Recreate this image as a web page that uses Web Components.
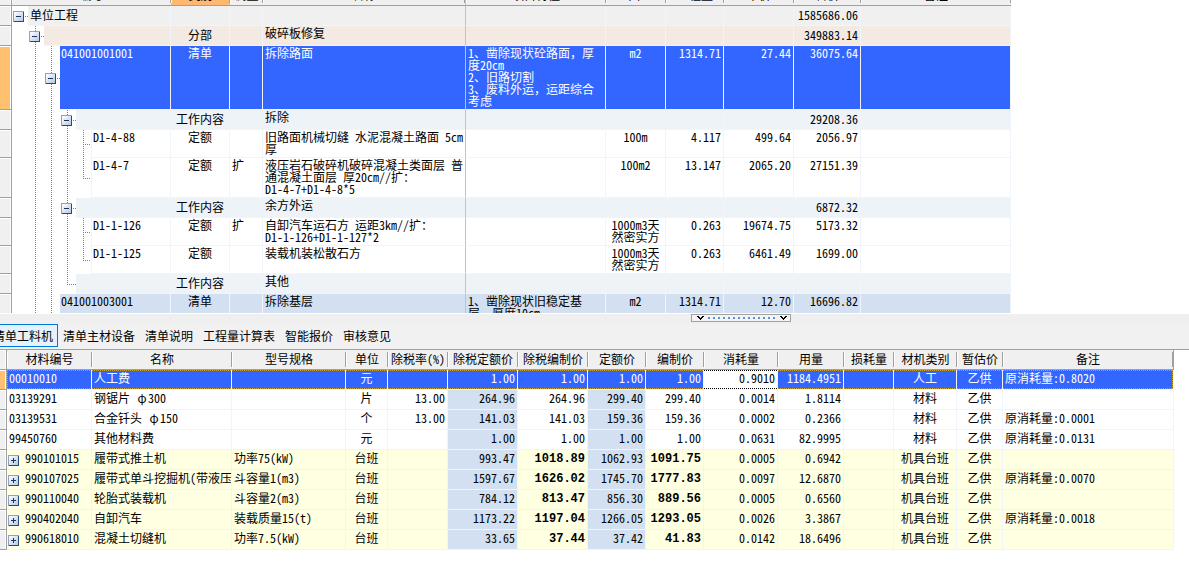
<!DOCTYPE html>
<html lang="zh-CN">
<head>
<meta charset="utf-8">
<title>单位工程计价</title>
<style>
html, body { margin: 0; height: 100%; background: #fff; overflow: hidden; }
</style>
</head>
<body>
<cost-workspace></cost-workspace>
<script>
const GRID_CSS = `
:host { display: block; overflow: hidden; color: #000; --line: #f0f4fb; }
* { box-sizing: border-box; }
table { width: 100%; table-layout: fixed; border-collapse: separate; border-spacing: 0; }
th, td {
  padding: 1px 2px 0; height: 20px; border-right: 1px solid var(--line); border-bottom: 1px solid var(--line);
  font-weight: 400; line-height: 12px; text-align: left; vertical-align: top; white-space: nowrap; overflow: hidden;
}
th { padding-top: 3px; }
thead th {
  text-align: center; padding-left: 1px; padding-right: 1px; border-right: 0; border-bottom: 1px solid #a0a0a0;
  background: linear-gradient(#a0a0a0, #a0a0a0) 100% 2px / 1px 15px no-repeat,
              linear-gradient(#fff, #fff) 0 2px / 1px 15px no-repeat, #f0f0f0;
}
.rowhead { background: #f0f0f0; border-right: 1px solid #a0a0a0; border-bottom: 1px solid #a0a0a0; box-shadow: inset -1px 1px #fff; }
.rowhead.on { background: #ffc070; }
.c { text-align: center; }
.r { text-align: right; }
`;

/* Expand / collapse box of a tree row */
class TreeToggle extends HTMLElement {
  connectedCallback() {
    const open = this.hasAttribute('open');
    this.attachShadow({ mode: 'open' }).innerHTML = `
      <style>
        :host { display: block; width: 11px; height: 11px; }
        button { display: block; width: 11px; height: 11px; padding: 0; border: 0; background: none; }
        svg { display: block; }
      </style>
      <button type="button" aria-expanded="${open}" aria-label="${open ? '折叠' : '展开'}">
        <svg width="11" height="11" viewBox="0 0 11 11" shape-rendering="crispEdges">
          <defs><linearGradient id="g" x1="0" y1="0" x2="1" y2="1">
            <stop offset="0" stop-color="#fff"/><stop offset="1" stop-color="#b4c8e8"/></linearGradient></defs>
          <rect width="11" height="11" fill="#2c4a70"/>
          <path d="M0 0H11V1H1V11H0Z" fill="#8ba3c4"/>
          <rect x="1" y="1" width="9" height="9" fill="url(#g)"/>
          <rect x="3" y="5" width="5" height="1" fill="#1c355c"/>
          ${open ? '' : '<rect x="5" y="3" width="1" height="5" fill="#1c355c"/>'}
        </svg>
      </button>`;
  }
}
customElements.define('tree-toggle', TreeToggle);

/* Bill of quantities: a tree in the first column */
class BillGrid extends HTMLElement {
  connectedCallback() {
    const widths = [12, 159, 59, 33, 203, 140, 60, 58, 70, 67];
    const heads = ['编号', '类别', '调整', '名称', '项目特征', '单位', '工程量', '单价', '合价', '备注'];
    const comma = '<span class="full">，</span>';
    // kind, row height, guides, code, type, flag, name, feature, unit, quantity, price, total
    const rows = [
      ['root', 20, 'b', '单位工程', '', '', '', '', '', '', '', '1585686.06'],
      ['part', 20, ' B', '', '分部', '', '破碎板修复', '', '', '', '', '349883.14'],
      ['sel', 64, ' vB', '041001001001', '清单', '', '拆除路面', `1、凿除现状砼路面${comma}厚<br>度20cm<br>2、旧路切割<br>3、废料外运${comma}运距综合<br>考虑`, 'm2', '1314.71', '27.44', '36075.64'],
      ['work', 20, ' vvB', '', '工作内容', '', '拆除', '', '', '', '', '29208.36'],
      ['leaf', 28, ' vvvt', 'D1-4-88', '定额', '', '旧路面机械切缝 水泥混凝土路面 5cm<br>厚', '', '100m', '4.117', '499.64', '2056.97'],
      ['leaf', 40, ' vvvl', 'D1-4-7', '定额', '扩', '液压岩石破碎机破碎混凝土类面层 普<br>通混凝土面层 厚20cm//扩：<br>D1-4-7+D1-4-8*5', '', '100m2', '13.147', '2065.20', '27151.39'],
      ['work', 20, ' vvB', '', '工作内容', '', '余方外运', '', '', '', '', '6872.32'],
      ['leaf', 28, ' vvvt', 'D1-1-126', '定额', '扩', '自卸汽车运石方 运距3km//扩：<br>D1-1-126+D1-1-127*2', '', '1000m3天<br>然密实方', '0.263', '19674.75', '5173.32'],
      ['leaf', 28, ' vvvl', 'D1-1-125', '定额', '', '装载机装松散石方', '', '1000m3天<br>然密实方', '0.263', '6461.49', '1699.00'],
      ['work', 20, ' vvl', '', '工作内容', '', '其他', '', '', '', '', ''],
      ['item', 64, ' vB', '041001003001', '清单', '', '拆除基层', `1、凿除现状旧稳定基<br>层${comma}厚度10cm`, 'm2', '1314.71', '12.70', '16696.82'],
    ];
    const guide = g => `<span class="g ${{ v: 'v', t: 'v h', l: 'e h', b: 'h', B: 'v h' }[g] || ''}">${/b/i.test(g) ? '<tree-toggle open></tree-toggle>' : ''}</span>`;
    const body = rows.map(([kind, h, guides, code, type, flag, name, feat, unit, qty, price, total]) => `
      <tr class="${kind} h${h}">
        <th class="rowhead${kind === 'sel' ? ' on' : ''}" scope="row"></th>
        <td class="tree"><div class="node">${[...guides].map(guide).join('')}<span class="label">${code}</span></div></td>
        <td class="c">${type}</td><td>${flag}</td><td class="name">${name}</td><td class="feat">${feat}</td>
        <td class="c">${unit}</td><td class="r">${qty}</td><td class="r">${price}</td><td class="r">${total}</td><td></td>
      </tr>`).join('');
    this.attachShadow({ mode: 'open' }).innerHTML = `
      <style>${GRID_CSS}
        :host { padding-right: 178px; border-bottom: 1px solid #fff; }
        table { margin-top: -14px; }
        .h28 > * { height: 28px; } .h40 > * { height: 40px; } .h64 > * { height: 64px; }
        thead th.on { background-color: #ffb870; }
        thead th:nth-child(5), td.name { border-right: 1px solid #a6c8f0; }
        .full { font-feature-settings: normal; }
        .root td, .part td, .work td { padding-top: 3px; }
        .part .name, .work .name { padding-top: 1px; }
        .root td, .root .label { background: #f0f0f0; }
        .part td, .part .label { background: #f2eae3; }
        .work td, .work .label { background: #eef3f8; }
        .item td, .item .label { background: #d2e0f1; }
        .sel td, .sel .label { background: #3366ff; color: #fff; }
        tbody tr td.tree { padding: 0; background: #fff; border: 0; }
        .node { display: flex; height: 100%; }
        .label { flex: 1; padding: 1px 1px 0; border-right: 1px solid var(--line); border-bottom: 1px solid var(--line); }
        .root .label { padding: 3px 2px 0; }
        .leaf .label { border-left: 1px solid var(--line); margin-left: -1px; }
        .g { display: flex; align-items: center; width: 16px; flex: none; }
        .g tree-toggle { margin: 0 -5px 0 1px; flex: none; }
        .v, .e { background: linear-gradient(#808080 50%, transparent 50%) 7px 0 / 1px 2px repeat-y; }
        .e { background: linear-gradient(#fff, #fff) 0 100% / 100% 50% no-repeat,
                         linear-gradient(#808080 50%, transparent 50%) 7px 0 / 1px 2px repeat-y; }
        .h::after { content: ""; width: 9px; height: 1px; margin-left: 7px;
          background: linear-gradient(90deg, #808080 50%, transparent 50%) 0 0 / 2px 1px; }
        .g tree-toggle { position: relative; z-index: 1; }
        .g:has(tree-toggle)::after { margin-left: 6px; width: 3px; }
      </style>
      <table>
        <colgroup>${widths.map(w => `<col style="width:${w}px">`).join('')}<col></colgroup>
        <thead><tr><th class="rowhead"></th>${heads.map((t, i) => `<th scope="col"${i === 1 ? ' class="on"' : ''}>${t}</th>`).join('')}</tr></thead>
        <tbody>${body}</tbody>
      </table>`;
  }
}
customElements.define('bill-grid', BillGrid);

/* Labour, material and machine resources of the selected bill item */
class ResourceGrid extends HTMLElement {
  connectedCallback() {
    const widths = [7, 85, 140, 114, 42, 60, 70, 70, 58, 58, 74, 66, 50, 63, 46];
    const heads = ['材料编号', '名称', '型号规格', '单位', '除税率(%)', '除税定额价', '除税编制价', '定额价', '编制价', '消耗量', '用量', '损耗量', '材机类别', '暂估价', '备注'];
    const phi = '<span class="phi">φ</span>';
    const rows = [
      ['00010010', '人工费', '', '元', '', '1.00', '1.00', '1.00', '1.00', '0.9010', '1184.4951', '', '人工', '乙供', '原消耗量:0.8020'],
      ['03139291', `钢锯片 ${phi}300`, '', '片', '13.00', '264.96', '264.96', '299.40', '299.40', '0.0014', '1.8114', '', '材料', '乙供', ''],
      ['03139531', `合金钎头 ${phi}150`, '', '个', '13.00', '141.03', '141.03', '159.36', '159.36', '0.0002', '0.2366', '', '材料', '乙供', '原消耗量:0.0001'],
      ['99450760', '其他材料费', '', '元', '', '1.00', '1.00', '1.00', '1.00', '0.0631', '82.9995', '', '材料', '乙供', '原消耗量:0.0131'],
      ['990101015', '履带式推土机', '功率75(kW)', '台班', '', '993.47', '1018.89', '1062.93', '1091.75', '0.0005', '0.6942', '', '机具台班', '乙供', ''],
      ['990107025', '履带式单斗挖掘机(带液压', '斗容量1(m3)', '台班', '', '1597.67', '1626.02', '1745.70', '1777.83', '0.0097', '12.6870', '', '机具台班', '乙供', '原消耗量:0.0070'],
      ['990110040', '轮胎式装载机', '斗容量2(m3)', '台班', '', '784.12', '813.47', '856.30', '889.56', '0.0005', '0.6560', '', '机具台班', '乙供', ''],
      ['990402040', '自卸汽车', '装载质量15(t)', '台班', '', '1173.22', '1197.04', '1266.05', '1293.05', '0.0026', '3.3867', '', '机具台班', '乙供', '原消耗量:0.0018'],
      ['990618010', '混凝土切缝机', '功率7.5(kW)', '台班', '', '33.65', '37.44', '37.42', '41.83', '0.0142', '18.6496', '', '机具台班', '乙供', ''],
    ];
    const align = ['', '', '', 'c', 'r', 'r ro', 'r made', 'r ro', 'r made', 'r use', 'r', 'r', 'c', 'c', ''];
    const body = rows.map((cells, n) => {
      const machine = n > 3;
      return `<tr class="${n === 0 ? 'sel' : machine ? 'machine' : ''}">
        <th class="rowhead${n === 0 ? ' on' : ''}" scope="row"></th>
        ${cells.map((t, i) => i === 0 && machine
          ? `<td class="tree"><div class="node"><tree-toggle></tree-toggle><span>${t}</span></div></td>`
          : `<td class="${align[i]}">${t}</td>`).join('')}
      </tr>`;
    }).join('');
    this.attachShadow({ mode: 'open' }).innerHTML = `
      <style>${GRID_CSS}
        :host { padding-right: 15px; border-top: 1px solid #a0a0a0; background: #fff; }
        td { padding-top: 2px; }
        thead th:last-child { border-right: 1px solid #a0a0a0; }
        .phi { display: inline-block; width: 12px; text-align: center; }
        .machine td { background: #ffffe1; }
        .machine .made { font: bold 12px/12px "Liberation Mono", monospace; padding-top: 3px; }
        tr .ro, .machine td.ro { background: #d2e0f1; }
        td.tree { padding: 2px 1px 0; }
        .node { display: flex; gap: 6px; }
        .node tree-toggle { margin-top: 3px; }
        .sel td { --side: transparent; color: #fff; background:
          linear-gradient(90deg, #c8a030 50%, transparent 50%) 0 0 / 2px 1px repeat-x,
          linear-gradient(90deg, #c8a030 50%, transparent 50%) 0 100% / 2px 1px repeat-x,
          linear-gradient(var(--side) 50%, transparent 50%) var(--at, 0) 0 / 1px 2px repeat-y, #3366ff;
          background-clip: padding-box; background-origin: padding-box; }
        .sel td:nth-child(2) { --side: #c8a030; --at: 0; }
        .sel td:last-child { --side: #c8a030; --at: 100%; }
        .sel td.use { color: #000; background:
          linear-gradient(90deg, #000 50%, transparent 50%) 0 0 / 2px 1px repeat-x,
          linear-gradient(90deg, #000 50%, transparent 50%) 0 100% / 2px 1px repeat-x, #fff;
          background-origin: padding-box; }
      </style>
      <table>
        <colgroup>${widths.map(w => `<col style="width:${w}px">`).join('')}<col></colgroup>
        <thead><tr><th class="rowhead"></th>${heads.map(t => `<th scope="col">${t}</th>`).join('')}</tr></thead>
        <tbody>${body}</tbody>
      </table>`;
  }
}
customElements.define('resource-grid', ResourceGrid);

/* Splitter with its grip */
class PaneSplitter extends HTMLElement {
  connectedCallback() {
    const dots = Array.from({ length: 14 }, (_, i) => `<rect x="${17 + i * 5}" y="3" width="2" height="2" fill="#5b93dc"/>`).join('');
    this.attachShadow({ mode: 'open' }).innerHTML = `
      <style>
        :host { display: grid; grid-template-columns: 691fr 100px 398fr; height: 10px; background: #efefef; }
        button { grid-column: 2; width: 100px; height: 8px; padding: 0; border: 0; background: none; }
        svg { display: block; }
      </style>
      <button type="button" aria-label="收起下方窗格">
        <svg width="100" height="8" viewBox="0 0 100 8" shape-rendering="crispEdges">
          <rect width="100" height="8" fill="#a0a0a0"/><rect x="1" y="1" width="98" height="6" fill="#f4f4f4"/>
          <path id="c" d="M6 2h2v1h1v1h1v-1h1v-1h2v1h-1v1h-1v1h-1v1h-1v-1h-1v-1h-1v-1h-1z" fill="#000"/>
          <use href="#c" x="83"/>${dots}
        </svg>
      </button>`;
  }
}
customElements.define('pane-splitter', PaneSplitter);

class DetailTab extends HTMLElement {
  connectedCallback() {
    this.attachShadow({ mode: 'open' }).innerHTML = `
      <style>
        :host { display: block; }
        button { display: block; height: 23px; padding: 0 4px; border: 1px solid transparent; background: none;
          font: inherit; color: inherit; line-height: 21px; white-space: nowrap; }
        :host([selected]) button { border-color: #0078d7; background: #e5f1fb; }
      </style>
      <button type="button" role="tab" aria-selected="${this.hasAttribute('selected')}"><slot></slot></button>`;
  }
}
customElements.define('detail-tab', DetailTab);

class DetailTabs extends HTMLElement {
  connectedCallback() {
    this.attachShadow({ mode: 'open' }).innerHTML = `
      <style>
        :host { display: block; overflow: hidden; background: #f1f1f1; }
        div { display: flex; margin-left: -12px; padding-bottom: 2px; }
      </style>
      <div role="tablist"><slot></slot></div>`;
  }
}
customElements.define('detail-tabs', DetailTabs);

class CostWorkspace extends HTMLElement {
  connectedCallback() {
    this.attachShadow({ mode: 'open' }).innerHTML = `
      <style>
        :host { display: flex; flex-direction: column; height: 100vh; overflow: hidden; color: #000;
          font: 12px/12px "Noto Sans CJK SC", sans-serif; font-feature-settings: "hwid"; }
        bill-grid { flex: 1 1 0; min-height: 0; }
        section { flex: none; padding-bottom: 12px; }
      </style>
      <bill-grid></bill-grid>
      <pane-splitter></pane-splitter>
      <section>
        <detail-tabs>
          <detail-tab selected>清单工料机</detail-tab>
          <detail-tab>清单主材设备</detail-tab>
          <detail-tab>清单说明</detail-tab>
          <detail-tab>工程量计算表</detail-tab>
          <detail-tab>智能报价</detail-tab>
          <detail-tab>审核意见</detail-tab>
        </detail-tabs>
        <resource-grid></resource-grid>
      </section>`;
  }
}
customElements.define('cost-workspace', CostWorkspace);
</script>
</body>
</html>
